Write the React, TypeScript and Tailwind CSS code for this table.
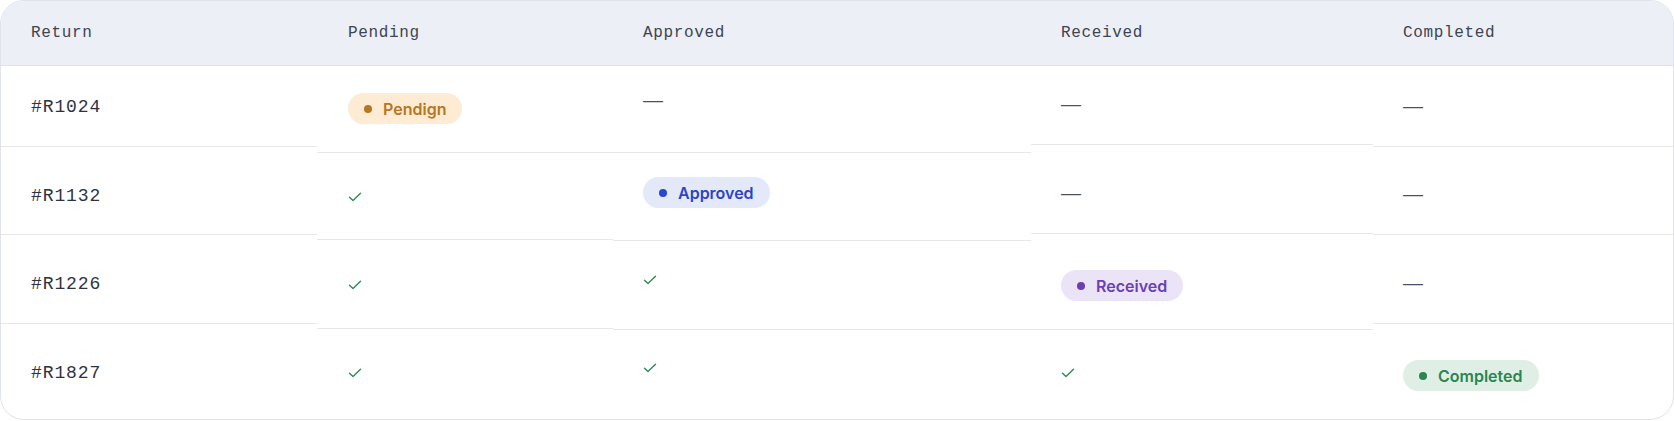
import React from "react";

type Status = "pending" | "approved" | "received" | "completed";

const badgeStyles: Record<Status, { wrap: string; dot: string; label: string }> = {
  pending: { wrap: "bg-[#fdebd4] text-[#b8761f]", dot: "bg-[#b8761f]", label: "Pendign" },
  approved: { wrap: "bg-[#e4e9fa] text-[#2b44c6]", dot: "bg-[#2a45d4]", label: "Approved" },
  received: { wrap: "bg-[#ebe4f7] text-[#6a3fb4]", dot: "bg-[#6a3fb4]", label: "Received" },
  completed: { wrap: "bg-[#e0efe5] text-[#2a8550]", dot: "bg-[#2a8550]", label: "Completed" },
};

const Badge = ({ status }: { status: Status }) => {
  const s = badgeStyles[status];
  return (
    <span
      className={`inline-flex h-[31px] items-center gap-[11px] rounded-full px-4 font-['Inter',sans-serif] text-[16px] font-semibold leading-none ${s.wrap}`}
    >
      <span className={`size-2 rounded-full ${s.dot}`} />
      {s.label}
    </span>
  );
};

const Check = () => (
  <svg width="14" height="10" viewBox="0 0 14 10" fill="none" className="block">
    <path
      d="M1.5 5.2 5 8.6 12.5 1.3"
      stroke="#2e8a56"
      strokeWidth="1.4"
      strokeLinecap="round"
      strokeLinejoin="round"
    />
  </svg>
);

const Dash = () => (
  <span className="block h-[20px] font-['Liberation_Sans',sans-serif] text-[20px] leading-[20px] text-[#4b5162]">
    —
  </span>
);

const Id = ({ children }: { children: React.ReactNode }) => (
  <span className="block font-['Liberation_Mono',monospace] text-[18px] leading-6 tracking-[0.05em] text-[#2e3341]">
    {children}
  </span>
);

type Cell = { cls: string; content: React.ReactNode };
type Column = { title: string; width: string; pad: string; cells: Cell[] };

const columns: Column[] = [
  {
    title: "Return",
    width: "w-[316px]",
    pad: "pl-[30px]",
    cells: [
      { cls: "h-[81px] pt-[29px] border-b", content: <Id>#R1024</Id> },
      { cls: "h-[88px] pt-[37px] border-b", content: <Id>#R1132</Id> },
      { cls: "h-[89px] pt-[37px] border-b", content: <Id>#R1226</Id> },
      { cls: "flex-1 pt-[37px]", content: <Id>#R1827</Id> },
    ],
  },
  {
    title: "Pending",
    width: "w-[296px]",
    pad: "pl-[31px]",
    cells: [
      { cls: "h-[87px] pt-[27px] border-b", content: <Badge status="pending" /> },
      { cls: "h-[87px] pt-[39px] border-b", content: <Check /> },
      { cls: "h-[89px] pt-[40px] border-b", content: <Check /> },
      { cls: "flex-1 pt-[39px]", content: <Check /> },
    ],
  },
  {
    title: "Approved",
    width: "w-[418px]",
    pad: "pl-[30px]",
    cells: [
      { cls: "h-[87px] pt-[24px] border-b", content: <Dash /> },
      { cls: "h-[88px] pt-[24px] border-b", content: <Badge status="approved" /> },
      { cls: "h-[89px] pt-[34px] border-b", content: <Check /> },
      { cls: "flex-1 pt-[33px]", content: <Check /> },
    ],
  },
  {
    title: "Received",
    width: "w-[342px]",
    pad: "pl-[30px]",
    cells: [
      { cls: "h-[79px] pt-[28px] border-b", content: <Dash /> },
      { cls: "h-[89px] pt-[38px] border-b", content: <Dash /> },
      { cls: "h-[96px] pt-[36px] border-b", content: <Badge status="received" /> },
      { cls: "flex-1 pt-[38px]", content: <Check /> },
    ],
  },
  {
    title: "Completed",
    width: "flex-1",
    pad: "pl-[30px]",
    cells: [
      { cls: "h-[81px] pt-[30px] border-b", content: <Dash /> },
      { cls: "h-[88px] pt-[37px] border-b", content: <Dash /> },
      { cls: "h-[89px] pt-[38px] border-b", content: <Dash /> },
      { cls: "flex-1 pt-[36px]", content: <Badge status="completed" /> },
    ],
  },
];

export default function App() {
  return (
    <div className="bg-white">
      <div className="flex h-[420px] w-full overflow-hidden rounded-[24px] border border-[#e0e3eb] bg-white">
        {columns.map((col) => (
          <div key={col.title} className={`flex flex-col ${col.width}`}>
            <div
              className={`flex h-[65px] shrink-0 items-center border-b border-[#dde1e9] bg-[#eceff6] ${col.pad} font-['Liberation_Mono',monospace] text-[16px] leading-6 tracking-[0.04em] text-[#3f4451]`}
            >
              {col.title}
            </div>
            {col.cells.map((cell, i) => (
              <div key={i} className={`shrink-0 border-[#e7e7e4] ${col.pad} ${cell.cls}`}>
                {cell.content}
              </div>
            ))}
          </div>
        ))}
      </div>
    </div>
  );
}
